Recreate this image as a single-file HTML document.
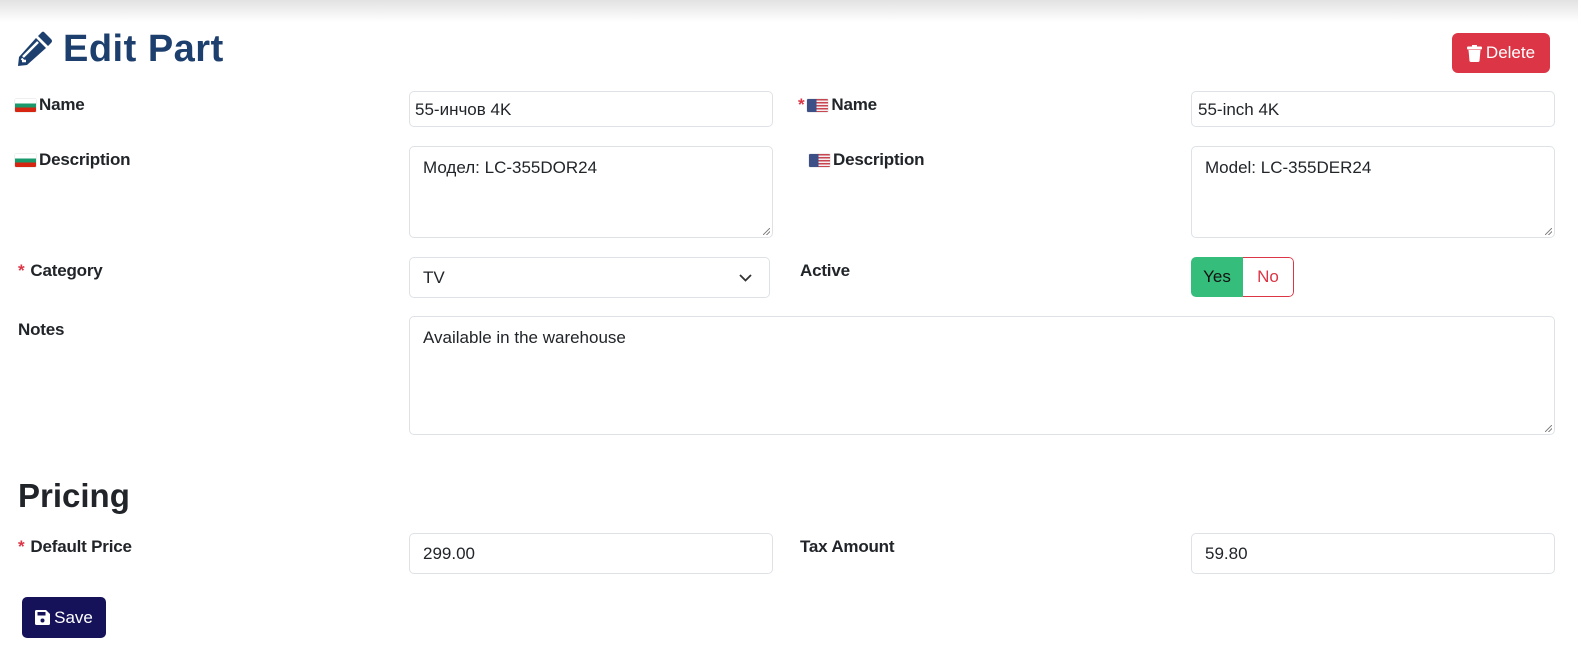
<!DOCTYPE html>
<html><head><meta charset="utf-8"><style>
*{box-sizing:border-box;margin:0;padding:0}
body{width:1578px;height:647px;background:#fff;position:relative;overflow:hidden;font-family:"Liberation Sans",sans-serif;color:#212529}
.shadow{position:absolute;left:0;top:0;width:1578px;height:22px;background:linear-gradient(#e2e2e2,#fff)}
.abs{position:absolute}
.lbl{position:absolute;font-weight:bold;font-size:17px;color:#212529;display:flex;align-items:center;gap:3px;letter-spacing:-0.2px}
.req{color:#dc3545;font-weight:bold;margin-right:3px}
.box{position:absolute;border:1px solid #dee2e6;border-radius:5px;background:#fff;font-size:17px;color:#212529}
.inp{padding:8px 6px}
.ta{padding:11px 13px}
.ta::after{content:"";position:absolute;right:2px;bottom:2px;width:7px;height:7px;background:linear-gradient(135deg,transparent 45%,#888 45%,#888 55%,transparent 55%,transparent 70%,#888 70%,#888 80%,transparent 80%)}
.flag{width:21px;height:13px;display:inline-block;border-radius:1px;box-shadow:0 0 1px #999}
.bg{background:linear-gradient(#fff 0 33%,#1a9a6c 33% 66%,#d62612 66%)}
.us{background:linear-gradient(90deg,#3c4f86 0 45%,transparent 45%),repeating-linear-gradient(#c8464f 0 1.5px,#f4eef0 1.5px 3px)}
</style></head><body>
<div class="shadow"></div>
<svg class="abs" style="left:16px;top:30px" width="38" height="37" viewBox="0 0 38 37"><path d="M28 2 L35 9 Q37 11 35 13 L32 16 L22 6 L25 3 Q26.5 1 28 2Z" fill="#1d3f6e"/><path d="M20 8 L30 18 L11 35 L2 36 L3 27Z" fill="#1d3f6e"/><path d="M7 27 L22 12 M6 31 L10 31" stroke="#fff" stroke-width="2.5" fill="none"/><path d="M5.5 28.5 L8.5 31.5" stroke="#fff" stroke-width="2"/></svg>
<div class="abs" style="left:63px;top:28px;font-size:38px;font-weight:bold;color:#1d3f6e;letter-spacing:0.5px">Edit Part</div>
<div class="abs" style="left:1452px;top:33px;width:98px;height:40px;background:#dc3545;border-radius:6px;color:#fff;font-size:17px;display:flex;align-items:center;justify-content:center;gap:4px">
<svg width="15" height="17" viewBox="0 0 15 17"><rect x="0" y="1.5" width="15" height="3" rx="1" fill="#fff"/><rect x="5" y="0" width="5" height="2" fill="#fff"/><path d="M1.5 5 H13.5 L12.5 16 Q12.3 17 11 17 H4 Q2.7 17 2.5 16Z" fill="#fff"/></svg>Delete</div>

<div class="lbl" style="left:15px;top:95px"><span class="flag bg"></span>Name</div>
<div class="box inp" style="left:409px;top:91px;width:364px;height:36px;padding-left:5px">55-инчов 4K</div>
<div class="lbl" style="left:798px;top:95px"><span class="req" style="margin-right:0">*</span><span class="flag us"></span>Name</div>
<div class="box inp" style="left:1191px;top:91px;width:364px;height:36px;padding-left:6px">55-inch 4K</div>

<div class="lbl" style="left:15px;top:150px"><span class="flag bg"></span>Description</div>
<div class="box ta" style="left:409px;top:146px;width:364px;height:92px;padding-top:11px">Модел: LC-355DOR24</div>
<div class="lbl" style="left:809px;top:150px"><span class="flag us"></span>Description</div>
<div class="box ta" style="left:1191px;top:146px;width:364px;height:92px">Model: LC-355DER24</div>

<div class="lbl" style="left:18px;top:261px"><span class="req">*</span>Category</div>
<div class="box" style="left:409px;top:257px;width:361px;height:41px;padding:10px 13px">TV
<svg class="abs" style="right:17px;top:16px" width="13" height="8" viewBox="0 0 13 8"><path d="M1 1 L6.5 6.5 L12 1" stroke="#333" stroke-width="1.8" fill="none"/></svg></div>
<div class="lbl" style="left:800px;top:261px">Active</div>
<div class="abs" style="left:1191px;top:257px;width:103px;height:40px;border-radius:5px;overflow:hidden;display:flex;font-size:17px">
<div style="width:52px;background:#35bd7b;color:#111;display:flex;align-items:center;justify-content:center">Yes</div>
<div style="flex:1;color:#dc3545;border:1px solid #dc3545;border-left:none;border-radius:0 5px 5px 0;display:flex;align-items:center;justify-content:center">No</div></div>

<div class="lbl" style="left:18px;top:320px">Notes</div>
<div class="box ta" style="left:409px;top:316px;width:1146px;height:119px">Available in the warehouse</div>

<div class="abs" style="left:18px;top:477px;font-size:33px;font-weight:bold;color:#212529">Pricing</div>

<div class="lbl" style="left:18px;top:537px"><span class="req">*</span>Default Price</div>
<div class="box" style="left:409px;top:533px;width:364px;height:41px;padding:10px 13px">299.00</div>
<div class="lbl" style="left:800px;top:537px">Tax Amount</div>
<div class="box" style="left:1191px;top:533px;width:364px;height:41px;padding:10px 13px">59.80</div>

<div class="abs" style="left:22px;top:597px;width:84px;height:41px;background:#15125a;border-radius:5px;color:#fff;font-size:17px;display:flex;align-items:center;justify-content:center;gap:4px">
<svg width="15" height="15" viewBox="0 0 15 15"><path d="M1.5 0 H11 L15 4 V13.5 Q15 15 13.5 15 H1.5 Q0 15 0 13.5 V1.5 Q0 0 1.5 0Z" fill="#fff"/><rect x="2.5" y="2" width="8" height="3.5" fill="#15125a"/><circle cx="7.5" cy="10.5" r="2" fill="#15125a"/></svg>Save</div>
</body></html>
